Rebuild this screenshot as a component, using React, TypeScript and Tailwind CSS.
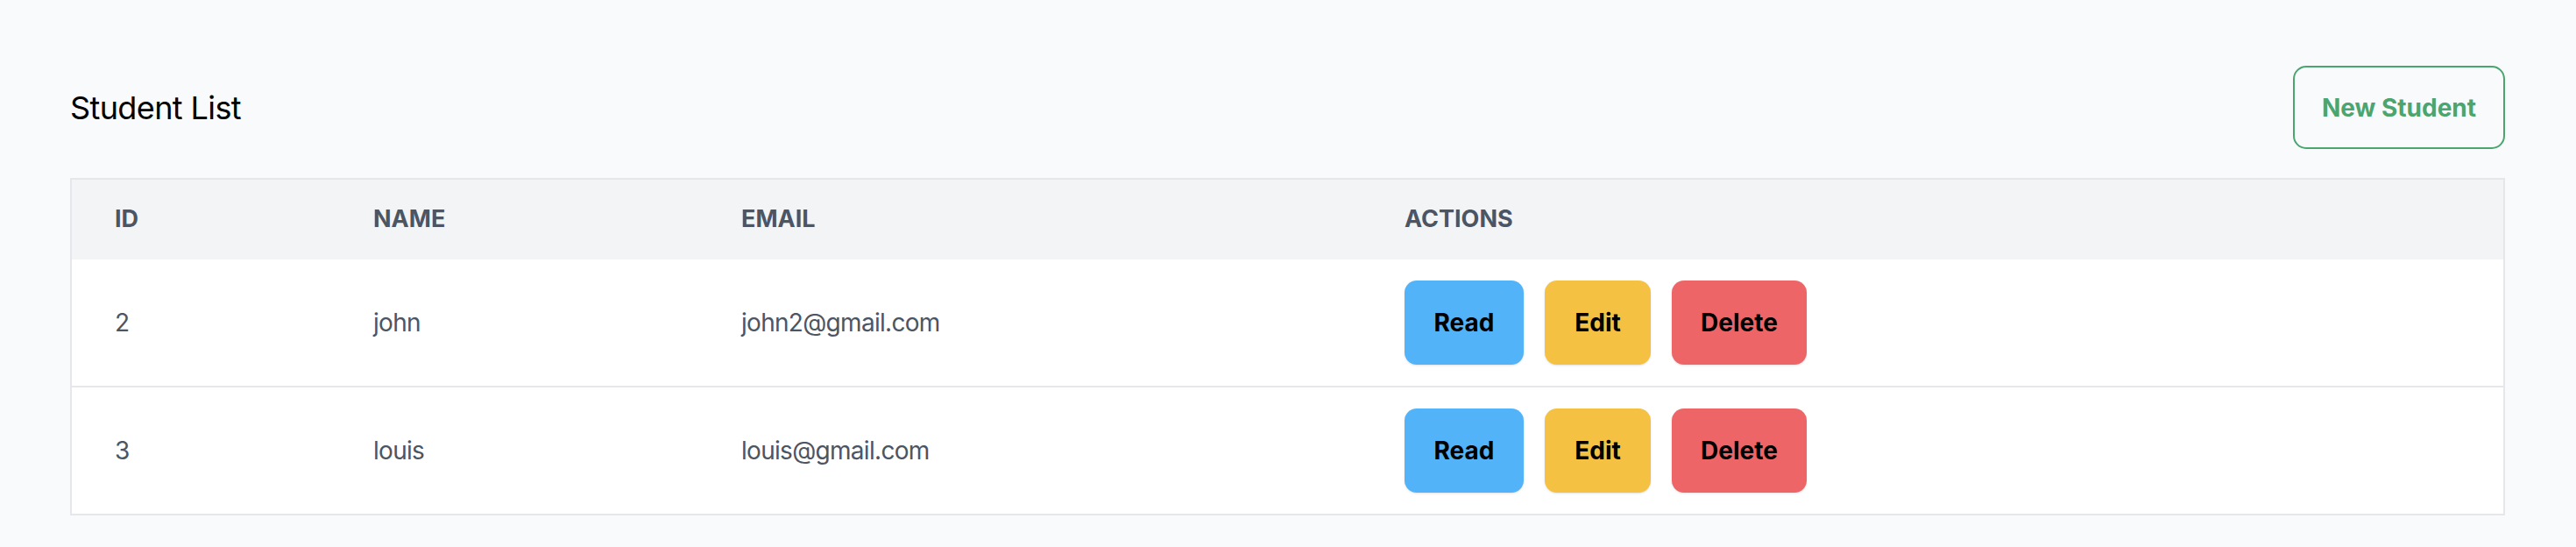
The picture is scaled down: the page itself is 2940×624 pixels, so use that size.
import React from "react";

const rows = [
  { id: 2, name: "john", email: "john2@gmail.com" },
  { id: 3, name: "louis", email: "louis@gmail.com" },
];

export default function App() {
  return (
    <div
      className="min-h-[624px] w-full bg-[#f9fafb] px-[80px] pt-[75px] pr-[81px]"
      style={{ fontFamily: "Inter, 'Noto Sans', sans-serif" }}
    >
      <div className="flex items-center justify-between">
        <h1 className="text-[36px] font-normal tracking-[-0.6px] text-black leading-none">Student List</h1>
        <button className="h-[95px] w-[242px] rounded-[15px] border-2 border-[#4aa56f] text-[28px] font-bold text-[#4aa56f]">
          New Student
        </button>
      </div>
      <div className="mt-[33px] border-2 border-[#e5e7eb] bg-white">
        <div className="grid h-[91px] grid-cols-[295px_420px_757px_1fr] items-center bg-[#f3f4f6] text-[27px] font-bold uppercase text-[#4b5563]">
          <div className="pl-[49px]">ID</div>
          <div className="pl-[49px]">Name</div>
          <div className="pl-[49px]">Email</div>
          <div className="pl-[49px]">Actions</div>
        </div>
        {rows.map((r, i) => (
          <div
            key={r.id}
            className={`grid grid-cols-[295px_420px_757px_1fr] items-center py-[24px] text-[28px] tracking-[-0.7px] text-[#4b5563] ${
              i > 0 ? "border-t-2 border-[#e5e7eb]" : ""
            }`}
          >
            <div className="pl-[49px]">{r.id}</div>
            <div className="pl-[49px]">{r.name}</div>
            <div className="pl-[49px]">{r.email}</div>
            <div className="flex gap-[24px] pl-[49px] tracking-normal">
              <button className="h-[96px] w-[136px] rounded-[14px] bg-[#52b3f9] text-[28px] font-bold text-black shadow-sm">
                Read
              </button>
              <button className="h-[96px] w-[121px] rounded-[14px] bg-[#f4c142] text-[28px] font-bold text-black shadow-sm">
                Edit
              </button>
              <button className="h-[96px] w-[154px] rounded-[14px] bg-[#ed6567] text-[28px] font-bold text-black shadow-sm">
                Delete
              </button>
            </div>
          </div>
        ))}
      </div>
    </div>
  );
}
